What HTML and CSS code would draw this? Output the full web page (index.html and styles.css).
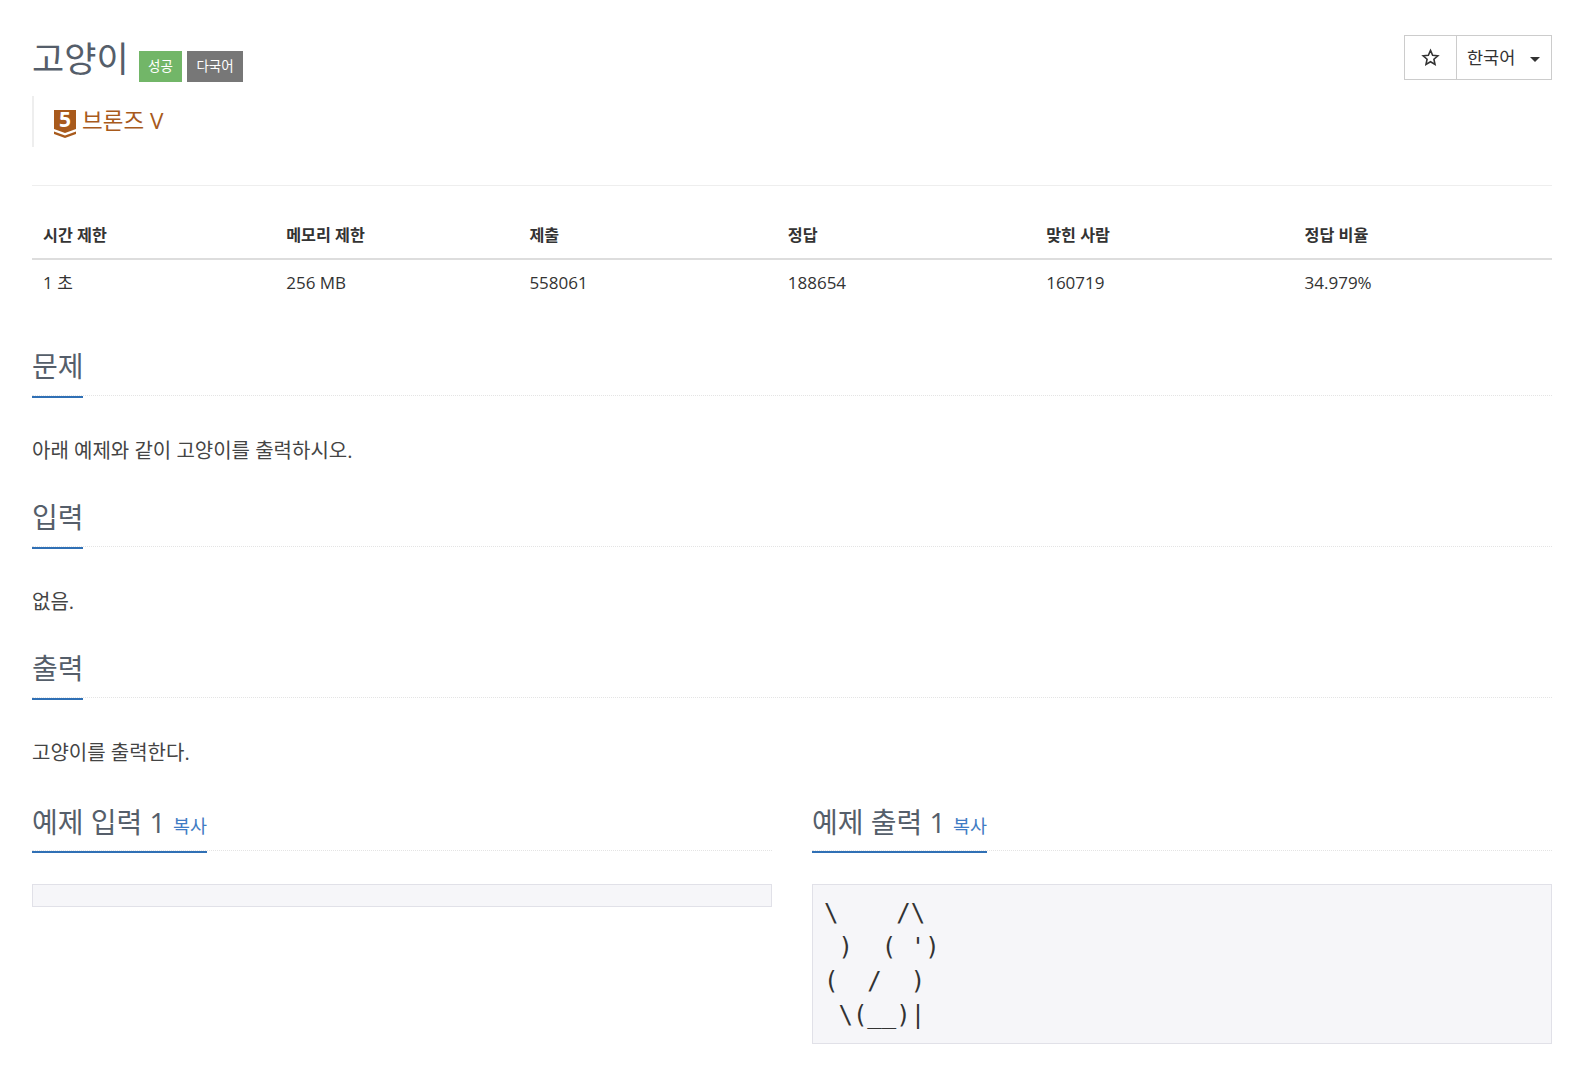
FILE: index.html
```html
<!DOCTYPE html>
<html lang="ko">
<head>
<meta charset="utf-8">
<title>고양이</title>
<link rel="stylesheet" href="styles.css">
</head>
<body>
<div class="page">
  <div class="page-header">
    <div class="title-row">
      <h1 class="title">고양이</h1>
      <span class="label label-green">성공</span>
      <span class="label label-gray">다국어</span>
    </div>
    <div class="btn-group">
      <div class="btn btn-star">
        <svg width="19" height="19" viewBox="0 0 24 24" fill="none" stroke="#333" stroke-width="2" stroke-linejoin="miter"><path d="M12 3l2.700 6.100 6.600.7-5 4.400 1.400 6.500-5.700-3.300-5.700 3.300 1.400-6.500-5-4.400 6.600-.7z"/></svg>
      </div>
      <div class="btn btn-lang">한국어<span class="caret"></span></div>
    </div>
  </div>
  <blockquote class="tier">
    <div class="tier-icon">
      <svg width="22" height="28" viewBox="0 0 22 28"><path fill="#a85a1c" d="M0 0h22v19l-11 4-11-4z"/><path fill="#a85a1c" d="M0 21.500l11 4 11-4v2.500l-11 4-11-4z"/></svg>
      <span class="tier-num">5</span>
    </div>
    <span>브론즈 V</span>
  </blockquote>
  <hr class="rule">
  <table class="info">
    <thead>
      <tr><th class="c1">시간 제한</th><th class="c1">메모리 제한</th><th class="c2">제출</th><th class="c2">정답</th><th class="c2">맞힌 사람</th><th class="c2">정답 비율</th></tr>
    </thead>
    <tbody>
      <tr><td>1 초</td><td>256 MB</td><td>558061</td><td>188654</td><td>160719</td><td>34.979%</td></tr>
    </tbody>
  </table>
  <section class="sec">
    <div class="headline"><h2>문제</h2></div>
    <p class="desc">아래 예제와 같이 고양이를 출력하시오.</p>
  </section>
  <section class="sec">
    <div class="headline"><h2>입력</h2></div>
    <p class="desc">없음.</p>
  </section>
  <section class="sec">
    <div class="headline"><h2>출력</h2></div>
    <p class="desc">고양이를 출력한다.</p>
  </section>
  <div class="samples">
    <section class="sample">
      <div class="headline"><h2>예제 입력 1 <a class="copy">복사</a></h2></div>
      <pre class="code"></pre>
    </section>
    <section class="sample">
      <div class="headline"><h2>예제 출력 1 <a class="copy">복사</a></h2></div>
      <pre class="code">\    /\
 )  ( ')
(  /  )
 \(__)|</pre>
    </section>
  </div>
</div>
</body>
</html>
```

FILE: styles.css
```css
* {box-sizing:border-box}
body {margin:0;background:#fff;color:#333;font-family:"Open Sans","Noto Sans CJK KR",sans-serif;font-size:18px;line-height:1.5}
.page {padding:0 38px 0 32px}
.page-header {display:flex;justify-content:space-between;align-items:flex-start;padding-top:35px}
.title-row {display:flex;align-items:flex-start}
.title {margin:2px 10px 0 0;font-size:35px;font-weight:400;line-height:44px;color:#555e6a}
.label {display:block;height:31px;margin-top:16px;font-size:13.5px;line-height:31px;color:#fff}
.label-green {margin-right:5px;padding:0 9.5px;background:#72b668}
.label-gray {padding:0 9px;background:#777}
.btn-group {display:flex;height:45px;border:1px solid #ccc;font-size:17.5px;color:#333}
.btn {display:flex;align-items:center}
.btn-star {width:52px;justify-content:center;border-right:1px solid #ccc}
.btn-lang {width:94px;padding-left:10px}
.caret {width:0;height:0;margin-left:15px;margin-top:3px;border-top:5px solid #333;border-left:5px solid transparent;border-right:5px solid transparent}
.tier {display:flex;align-items:flex-start;height:51px;margin:14px 0 0;padding:10px 0 0 20px;border-left:2px solid #eee;font-size:22.5px;line-height:30px;color:#a85a1c}
.tier-icon {position:relative;flex:none;width:22px;height:28px;margin:4px 6px 0 0}
.tier-icon svg {display:block}
.tier-num {position:absolute;left:0;top:-1px;width:22px;text-align:center;font-size:21px;line-height:21px;font-weight:700;color:#fff}
.rule {margin:38px 0 0;border:0;border-top:1px solid #eee}
.info {width:100%;margin:28px 0 42px;border-collapse:collapse;table-layout:fixed;font-size:17px}
.info th {height:45px;padding:0 11px 2px;text-align:left;font-weight:700;border-bottom:2px solid #ddd;font-size:16.2px}
.info td {height:47px;padding:0 11px}
.info .c1 {width:16%}
.info .c2 {width:17%}
.sec {margin-top:33px}
.headline {height:48px;border-bottom:1px dotted #e4e4e4}
.headline h2 {display:inline-block;height:50px;margin:0;padding:0;border-bottom:2px solid #3070b5;font-size:28px;line-height:36px;font-weight:400;color:#555e6a;white-space:nowrap}
.sec .headline h2 {width:51px}
.desc {margin:40px 0 0;font-size:20px;line-height:30px;color:#444}
.samples {display:flex;gap:40px;margin-top:36px}
.sample {flex:1}
.sample .headline {height:47px}
.sample .headline h2 {height:49px}
.copy {font-size:18.5px;color:#3f7cc4}
.code {margin:33px 0 0;padding:11px;background:#f6f6f9;border:1px solid #e1e1e8;font-family:"DejaVu Sans Mono","Liberation Mono",monospace;font-size:24px;line-height:34px;color:#333}
.code:empty {height:23px;padding:0}
```
